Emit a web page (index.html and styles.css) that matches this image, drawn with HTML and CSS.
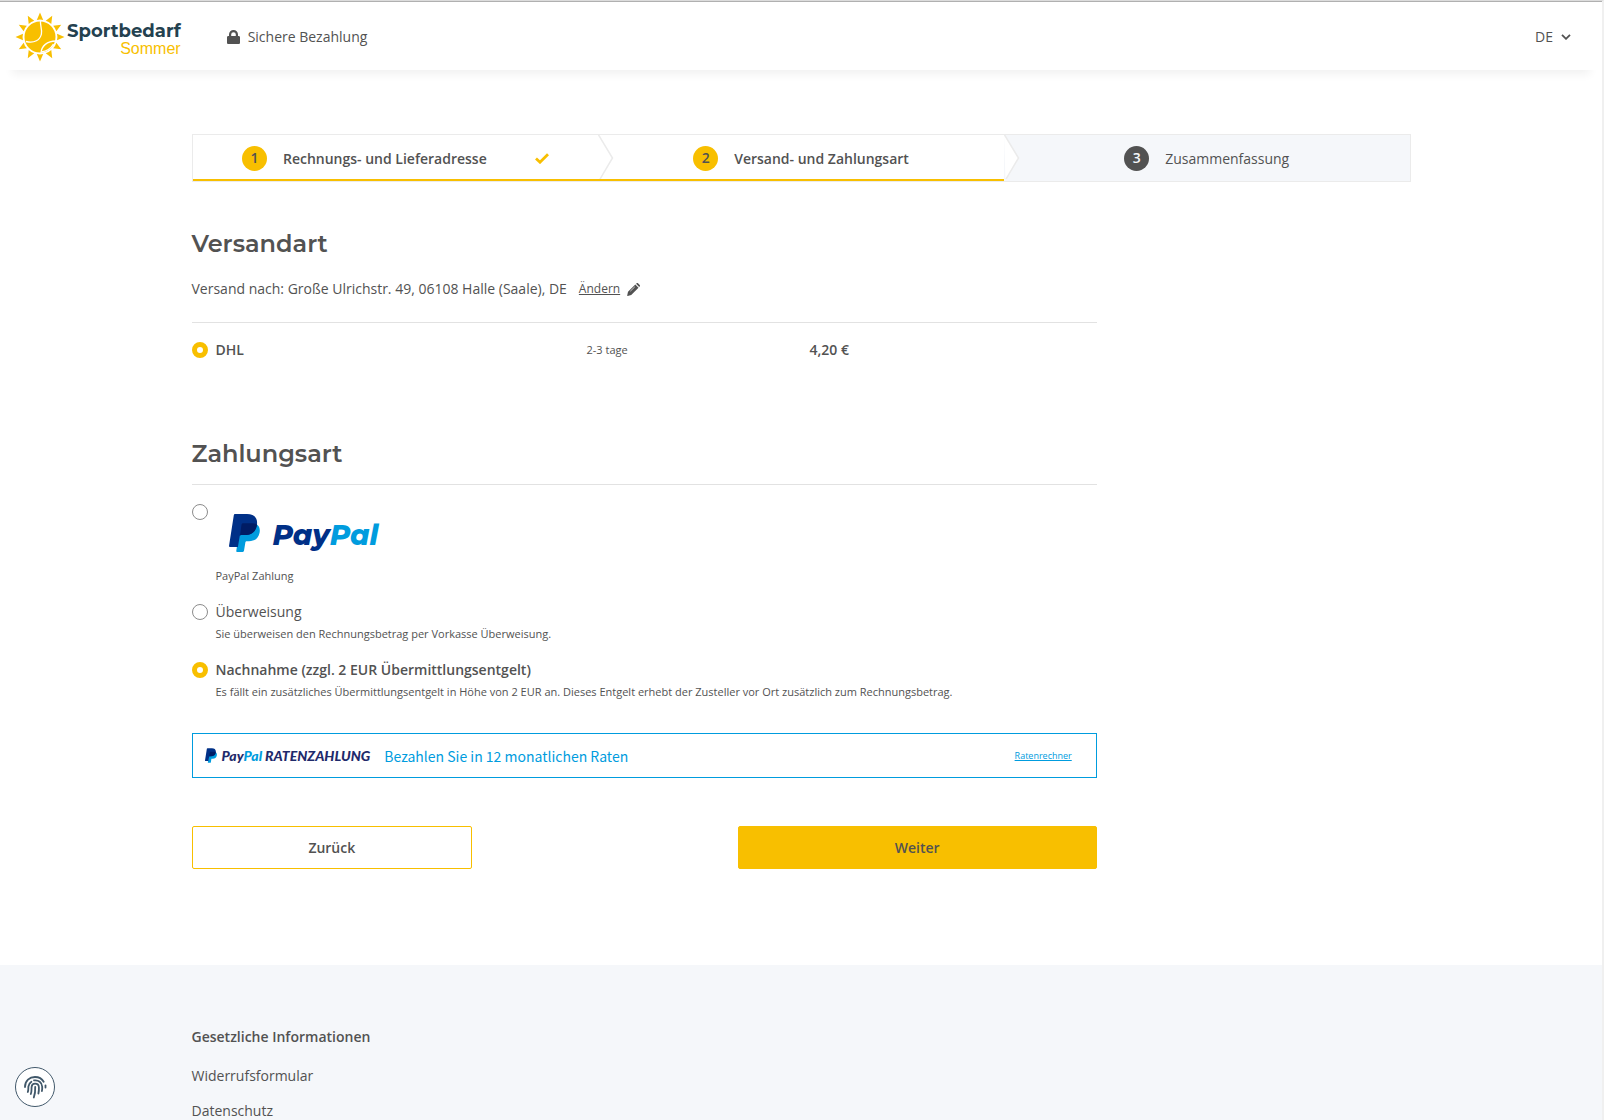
FILE: index.html
```html
<!DOCTYPE html>
<html lang="de">
<head>
    <meta charset="UTF-8">
    <meta name="viewport" content="width=device-width, initial-scale=1.0">
    <title>Sportbedarf Sommer - Bestellvorgang</title>
    <link rel="stylesheet" href="styles.css">
</head>
<body>
    <!-- Shared PayPal monogram -->
    <svg class="sprite" aria-hidden="true">
        <symbol id="paypal-mark" viewBox="0 0 31 38">
            <path fill="#009cde" d="M28 10.500c2.500 2 3.300 4.800 2.500 8.500-1.200 5.600-5 8.200-10.500 8.200h-2.300c-.7 0-1.200.4-1.300 1.100l-1.400 8.500c-.1.700-.6 1.200-1.300 1.200H8.300c-.7 0-1.100-.5-1-1.200L11 12z"/>
            <path fill="#003087" d="M6.300 0H18c6.500 0 10.800 3.500 10 10.200C27 17.600 22.500 21 15.500 21h-3.300c-.8 0-1.400.5-1.500 1.300L8.900 33H.9c-.6 0-1-.5-.9-1.100L4.800 1.300C4.900.5 5.500 0 6.300 0z"/>
            <path fill="#001c64" d="M13.200 9.500c.4-.2.700-.3 1.200-.3h9c1.700 0 3.300.3 4.600 1.200C27.200 17.600 22.500 21 15.500 21h-3.300c-.5 0-.9.200-1.200.5l1.500-10.800c.1-.5.300-.9.700-1.200z"/>
        </symbol>
    </svg>

    <header>
        <a class="logo" href="#" aria-label="Sportbedarf Sommer">
            <svg width="50" height="50" viewBox="0 0 50 50" aria-hidden="true">
                <g fill="#f8bf00">
                    <circle cx="25" cy="25" r="15.500"/>
                    <path id="ray" d="M25 .5 28.200 8q-3.200-.9-6.400 0z"/>
                    <use href="#ray" transform="rotate(30 25 25)"/>
                    <use href="#ray" transform="rotate(60 25 25)"/>
                    <use href="#ray" transform="rotate(90 25 25)"/>
                    <use href="#ray" transform="rotate(120 25 25)"/>
                    <use href="#ray" transform="rotate(150 25 25)"/>
                    <use href="#ray" transform="rotate(180 25 25)"/>
                    <use href="#ray" transform="rotate(210 25 25)"/>
                    <use href="#ray" transform="rotate(240 25 25)"/>
                    <use href="#ray" transform="rotate(270 25 25)"/>
                    <use href="#ray" transform="rotate(300 25 25)"/>
                    <use href="#ray" transform="rotate(330 25 25)"/>
                </g>
                <g fill="none" stroke="#fff" stroke-width="1.300">
                    <path d="M25.500 9c-.6 4 1.800 8 .9 13-1.200 6-7 9.500-15.400 7.500"/>
                    <path d="M26 41c.5-7 6-12 15-12"/>
                    <path d="M26.500 40c6-1 9-3 12-8"/>
                </g>
            </svg>
            <span class="logo-text">
                <strong>Sportbedarf</strong>
                <span>Sommer</span>
            </span>
        </a>
        <div class="secure">
            <svg width="13" height="14" viewBox="0 0 13 14" aria-hidden="true">
                <path fill="#525252" fill-rule="evenodd" d="M2 6V4.500a4.500 4.500 0 0 1 9 0V6h.7c.7 0 1.300.6 1.300 1.300v5.400c0 .7-.6 1.300-1.300 1.300H1.300C.6 14 0 13.400 0 12.700V7.300C0 6.600.6 6 1.300 6zm2.200 0h4.600V4.500a2.300 2.300 0 0 0-4.600 0z"/>
            </svg>
            <span>Sichere Bezahlung</span>
        </div>
        <button class="language" type="button">
            DE
            <svg width="10" height="6" viewBox="0 0 10 6" aria-hidden="true">
                <path fill="none" stroke="#525252" stroke-width="1.800" d="M1 .8l4 4 4-4"/>
            </svg>
        </button>
    </header>

    <main class="container">
        <ol class="steps">
            <li class="step active">
                <span class="badge">1</span>
                <span>Rechnungs- und Lieferadresse</span>
                <svg class="check" width="14" height="11" viewBox="0 0 14 11" aria-hidden="true">
                    <path fill="none" stroke="#f8bf00" stroke-width="2.800" d="M1 5.500l4 3.700L13 1.300"/>
                </svg>
                <svg class="arrow" viewBox="0 0 16 44" aria-hidden="true">
                    <path fill="#fff" stroke="#ebebeb" stroke-width="1.500" d="M0-1l14.500 24L1.500 45"/>
                </svg>
            </li>
            <li class="step active">
                <span class="badge">2</span>
                <span>Versand- und Zahlungsart</span>
                <svg class="arrow" viewBox="0 0 16 44" aria-hidden="true">
                    <path fill="#fff" stroke="#ebebeb" stroke-width="1.500" d="M0-1l14.500 24L1.500 45"/>
                </svg>
            </li>
            <li class="step">
                <span class="badge">3</span>
                <span>Zusammenfassung</span>
            </li>
        </ol>

        <form class="checkout">
            <section class="shipping">
                <h2>Versandart</h2>
                <p class="address">
                    Versand nach: Große Ulrichstr. 49, 06108 Halle (Saale), DE
                    <a href="#">Ändern</a>
                    <svg width="13" height="13" viewBox="0 0 13 13" aria-hidden="true">
                        <path fill="#525252" d="M8.300 1.500l3.200 3.200-7.300 7.300-3.500.9c-.3.100-.6-.2-.5-.5L1 8.800zM9.100.8l.5-.5c.4-.4 1-.4 1.400 0L12.700 2c.4.400.4 1 0 1.400l-.5.500z"/>
                        <path stroke="#fff" stroke-width=".7" d="M3.300 8.200l4.500-4.400"/>
                    </svg>
                </p>
                <div class="shipping-row">
                    <label class="option selected">
                        <input type="radio" name="versandart" checked>
                        <span>DHL</span>
                    </label>
                    <small>2-3 tage</small>
                    <strong>4,20 €</strong>
                </div>
            </section>

            <section class="payment">
                <h2>Zahlungsart</h2>
                <div class="payment-list">
                    <label class="option">
                        <input type="radio" name="zahlungsart">
                        <span class="paypal">
                            <svg width="31" height="38" aria-hidden="true"><use href="#paypal-mark"/></svg>
                            <span class="wordmark">Pay<span>Pal</span></span>
                        </span>
                        <small>PayPal Zahlung</small>
                    </label>
                    <label class="option">
                        <input type="radio" name="zahlungsart">
                        <span>Überweisung</span>
                        <small>Sie überweisen den Rechnungsbetrag per Vorkasse Überweisung.</small>
                    </label>
                    <label class="option selected">
                        <input type="radio" name="zahlungsart" checked>
                        <span>Nachnahme (zzgl. 2 EUR Übermittlungsentgelt)</span>
                        <small>Es fällt ein zusätzliches Übermittlungsentgelt in Höhe von 2 EUR an. Dieses Entgelt erhebt der Zusteller vor Ort zusätzlich zum Rechnungsbetrag.</small>
                    </label>
                </div>
            </section>

            <div class="installments">
                <svg width="12" height="15" aria-hidden="true"><use href="#paypal-mark"/></svg>
                <span class="wordmark">Pay<span>Pal</span> RATENZAHLUNG</span>
                <span class="offer">Bezahlen Sie in 12 monatlichen Raten</span>
                <a href="#">Ratenrechner</a>
            </div>

            <div class="actions">
                <button class="btn btn-outline" type="button">Zurück</button>
                <button class="btn btn-primary" type="submit">Weiter</button>
            </div>
        </form>
    </main>

    <footer>
        <div class="container">
            <h3>Gesetzliche Informationen</h3>
            <ul>
                <li><a href="#">Widerrufsformular</a></li>
                <li><a href="#">Datenschutz</a></li>
            </ul>
        </div>
    </footer>

    <button class="privacy" type="button" aria-label="Datenschutz-Einstellungen">
        <svg width="24" height="24" viewBox="0 0 24 24" fill="none" stroke="#41586a" stroke-width="1.800" stroke-linecap="round" aria-hidden="true">
            <path d="M2 12C2 5.800 6.500 2 12 2c3.800 0 7 1.800 8.700 4.800"/>
            <path d="M22.500 10.500v2"/>
            <path d="M4.800 17c.8-2 .4-4 .6-5.500.4-2 1.400-3.700 3-4.700"/>
            <path d="M11 5.400c4.500-.7 8 2 8.200 6.300.1 1.800 0 3-.3 4.300"/>
            <path d="M7.800 19c1-2.500.6-4.500.8-7 .2-2 1.600-3.300 3.500-3.300 2.200 0 3.700 1.500 3.800 3.500.1 2.300 0 4-.5 6.300"/>
            <path d="M12.200 12c.2 4 0 6.800-1.400 10.500"/>
        </svg>
    </button>
</body>
</html>
```
FILE: styles.css
```css
:root {
    --primary: #f8bf00;
    --text: #525252;
    --muted: #f5f7fa;
    --border: #ebebeb;
    --line: #e2e2e2;
    --paypal-dark: #003087;
    --paypal-light: #009cde;
}

* {
    margin: 0;
    padding: 0;
    box-sizing: border-box;
}

body {
    font-family: "Open Sans", "Noto Sans", sans-serif;
    font-size: 14px;
    line-height: 20px;
    color: var(--text);
    background-color: #ffffff;
    border-top: 1px solid #dcdcdc;
    border-right: 2px solid #f0f0f0;
    min-height: 100vh;
    display: flex;
    flex-direction: column;
}

a {
    color: inherit;
}

button {
    font: inherit;
    color: inherit;
    cursor: pointer;
}

small {
    font-size: 11px;
    line-height: 16px;
}

.sprite {
    position: absolute;
    width: 0;
    height: 0;
}

.container {
    width: 100%;
    max-width: 1251px;
    margin: 0 auto;
    padding: 0 16px;
}

/* Header */
header {
    display: flex;
    align-items: center;
    height: 69px;
    padding: 2px 31px 0 15px;
    border-top: 1px solid #b0b0b0;
    box-shadow: 0 16px 9px -12px rgba(0, 0, 0, 0.06);
}

.logo {
    display: flex;
    align-items: center;
    gap: 2px;
    text-decoration: none;
}

.logo-text {
    display: flex;
    flex-direction: column;
    align-items: flex-end;
    padding-top: 4px;
    color: var(--primary);
    font-family: "Liberation Sans", Arial, sans-serif;
    font-size: 16px;
    line-height: 16px;
}

.logo-text strong {
    color: #24414f;
    font-family: Montserrat, Lato, sans-serif;
    font-size: 18px;
    font-weight: 700;
    line-height: 20px;
}

.secure {
    display: flex;
    align-items: center;
    gap: 8px;
    margin-left: 46px;
}

.language {
    display: flex;
    align-items: center;
    gap: 8px;
    margin-left: auto;
    background: transparent;
    border: none;
}

/* Steps */
.steps {
    display: flex;
    margin-top: 64px;
    border: 1px solid var(--border);
    list-style: none;
}

.step {
    position: relative;
    flex: 1;
    display: flex;
    justify-content: center;
    align-items: center;
    gap: 16px;
    height: 46px;
    padding-top: 1px;
    background-color: var(--muted);
}

.step.active {
    background-color: #ffffff;
    box-shadow: inset 0 -2px var(--primary);
    font-weight: 600;
}

.badge {
    width: 25px;
    height: 25px;
    border-radius: 50%;
    background-color: var(--text);
    color: var(--muted);
    font-weight: 600;
    line-height: 24px;
    text-align: center;
}

.active .badge {
    background-color: var(--primary);
    color: var(--text);
}

.check {
    margin-left: 32px;
}

.arrow {
    position: absolute;
    top: 0;
    left: 100%;
    z-index: 1;
    width: 16px;
    height: 44px;
}

/* Checkout form */
.checkout {
    width: calc(75% - 9px);
    padding: 48px 0 96px;
}

h2 {
    font-family: Montserrat, Inter, sans-serif;
    font-size: 24px;
    font-weight: 600;
    line-height: 28px;
}

.address {
    display: flex;
    align-items: center;
    margin-top: 21px;
    padding-bottom: 23px;
    border-bottom: 1px solid var(--line);
}

.address a {
    margin: 0 7px 0 12px;
    font-size: 12px;
}

.shipping-row {
    display: grid;
    grid-template-columns: 395px 223px 1fr;
    align-items: center;
    padding-top: 17px;
}

.shipping-row strong {
    font-weight: 600;
}

.option {
    display: grid;
    grid-template-columns: 16px 1fr;
    column-gap: 8px;
    row-gap: 4px;
}

.option small {
    grid-column: 2;
}

.option.selected > span {
    font-weight: 600;
}

input[type="radio"] {
    appearance: none;
    width: 16px;
    height: 16px;
    margin-top: 2px;
    border: 1px solid #8c8c8c;
    border-radius: 50%;
    background-color: #ffffff;
}

input[type="radio"]:checked {
    border: 5px solid var(--primary);
}

.payment {
    margin-top: 80px;
}

.payment-list {
    display: flex;
    flex-direction: column;
    gap: 18px;
    margin-top: 16px;
    padding-top: 17px;
    border-top: 1px solid var(--line);
}

.wordmark {
    font-family: Lato, sans-serif;
    font-style: italic;
    font-weight: 900;
    color: var(--paypal-dark);
}

.wordmark span {
    color: var(--paypal-light);
}

.paypal {
    display: flex;
    align-items: center;
    gap: 13px;
    height: 62px;
    padding-left: 13px;
}

.paypal .wordmark {
    padding-top: 4px;
    font-family: Montserrat, Lato, sans-serif;
    font-size: 28px;
    font-weight: 800;
    line-height: 40px;
}

/* PayPal installments banner */
.installments {
    display: flex;
    align-items: center;
    margin-top: 33px;
    padding: 0 24px 0 12px;
    height: 45px;
    border: 1px solid var(--paypal-light);
    color: var(--paypal-light);
}

.installments .wordmark {
    margin: 0 14px 0 5px;
    color: #1f2a6b;
}

.installments .wordmark span {
    color: var(--paypal-light);
}

.offer {
    font-family: "Noto Sans CJK SC", sans-serif;
    font-size: 14px;
}

.installments a {
    margin-left: auto;
    font-size: 9px;
}

/* Buttons */
.actions {
    display: flex;
    justify-content: space-between;
    margin-top: 48px;
}

.btn {
    height: 43px;
    border: 1px solid var(--primary);
    border-radius: 2px;
    font-weight: 600;
}

.btn-outline {
    width: 31%;
    background-color: #ffffff;
}

.btn-primary {
    width: 359px;
    background-color: var(--primary);
}

/* Footer */
footer {
    flex: 1;
    padding-top: 62px;
    background-color: var(--muted);
}

footer h3 {
    margin-bottom: 20px;
    font-size: 14px;
    font-weight: 600;
}

footer ul {
    display: flex;
    flex-direction: column;
    gap: 17px;
    line-height: 18px;
    list-style: none;
}

footer a {
    text-decoration: none;
}

.privacy {
    position: fixed;
    left: 15px;
    bottom: 13px;
    display: flex;
    justify-content: center;
    align-items: center;
    width: 40px;
    height: 40px;
    border: 1px solid #41586a;
    border-radius: 50%;
    background-color: #ffffff;
}
```
